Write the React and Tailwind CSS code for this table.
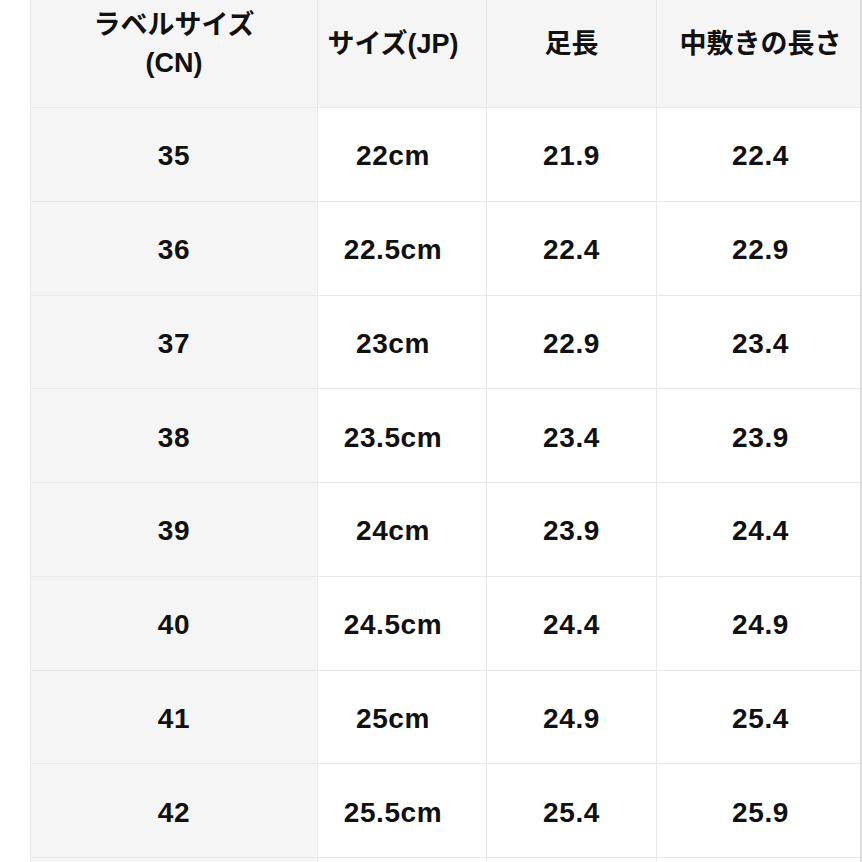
import React from "react";

const rows = [
  ["35", "22cm", "21.9", "22.4"],
  ["36", "22.5cm", "22.4", "22.9"],
  ["37", "23cm", "22.9", "23.4"],
  ["38", "23.5cm", "23.4", "23.9"],
  ["39", "24cm", "23.9", "24.4"],
  ["40", "24.5cm", "24.4", "24.9"],
  ["41", "25cm", "24.9", "25.4"],
  ["42", "25.5cm", "25.4", "25.9"],
];

const font = { fontFamily: '"Liberation Sans", "Noto Sans CJK JP", Arial, sans-serif' };

export default function App() {
  return (
    <div className="w-[862px] h-[862px] overflow-hidden bg-white" style={font}>
      <div className="ml-[30px] w-[832px] flex">
        <div className="w-[830px] grid grid-cols-[287px_169px_170px_204px] border-l border-[#e8e8e8] text-[#111]">
          <div className="h-[108px] bg-[#f5f5f5] border-b border-r border-[#e8e8e8] flex items-center justify-center pb-[20px] text-center text-[27px] leading-[38px] font-bold">
            <span>ラベルサイズ<br />(CN)</span>
          </div>
          <div className="h-[108px] bg-[#f5f5f5] border-b border-r border-[#e8e8e8] flex items-center justify-center pb-[20px] pr-[18px] text-[27px] leading-[38px] font-bold">
            サイズ(JP)
          </div>
          <div className="h-[108px] bg-[#f5f5f5] border-b border-r border-[#e8e8e8] flex items-center justify-center pb-[20px] text-[27px] leading-[38px] font-bold">
            足長
          </div>
          <div className="h-[108px] bg-[#f5f5f5] border-b border-r border-[#e8e8e8] flex items-center justify-center pb-[20px] pl-[4px] text-[27px] leading-[38px] font-bold">
            中敷きの長さ
          </div>
          {rows.map((r) => (
            <React.Fragment key={r[0]}>
              <div className="h-[93.75px] bg-[#f5f5f5] border-b border-r border-[#e8e8e8] flex items-center justify-center pt-[4px] text-[28px] tracking-[0.6px] font-bold">
                {r[0]}
              </div>
              <div className="h-[93.75px] bg-white border-b border-r border-[#e8e8e8] flex items-center justify-center pt-[4px] pr-[18px] text-[28px] tracking-[0.6px] font-bold">
                {r[1]}
              </div>
              <div className="h-[93.75px] bg-white border-b border-r border-[#e8e8e8] flex items-center justify-center pt-[4px] text-[28px] tracking-[0.6px] font-bold">
                {r[2]}
              </div>
              <div className="h-[93.75px] bg-white border-b border-r border-[#e8e8e8] flex items-center justify-center pt-[4px] pl-[4px] text-[28px] tracking-[0.6px] font-bold">
                {r[3]}
              </div>
            </React.Fragment>
          ))}
          <div className="h-[93.75px] bg-[#f5f5f5] border-r border-[#e8e8e8]" />
          <div className="h-[93.75px] bg-white border-r border-[#e8e8e8]" />
          <div className="h-[93.75px] bg-white border-r border-[#e8e8e8]" />
          <div className="h-[93.75px] bg-white border-r border-[#e8e8e8]" />
        </div>
        <div className="w-[2px] h-[862px] bg-[#dcdcdc]" />
      </div>
    </div>
  );
}
